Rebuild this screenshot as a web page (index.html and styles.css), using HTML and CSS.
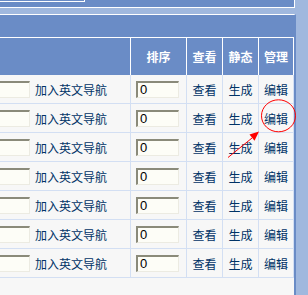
FILE: index.html
```html
<!DOCTYPE html>
<html>
<head>
<meta charset="utf-8">
<link rel="stylesheet" href="styles.css">
</head>
<body>
<div class="top-panel"><div class="tab"></div></div>
<div class="main">
  <div class="title-bar"></div>
  <div class="grid">
    <div class="hcell"></div>
    <div class="hcell">排序</div>
    <div class="hcell">查看</div>
    <div class="hcell">静态</div>
    <div class="hcell">管理</div>

    <div class="cell name"><input class="field wide" type="text" value=""><span>加入英文导航</span></div>
    <div class="cell order"><input class="field" type="text" value="0"></div>
    <div class="cell link">查看</div><div class="cell link">生成</div><div class="cell link">编辑</div>

    <div class="cell name"><input class="field wide" type="text" value=""><span>加入英文导航</span></div>
    <div class="cell order"><input class="field" type="text" value="0"></div>
    <div class="cell link">查看</div><div class="cell link">生成</div><div class="cell link">编辑</div>

    <div class="cell name"><input class="field wide" type="text" value=""><span>加入英文导航</span></div>
    <div class="cell order"><input class="field" type="text" value="0"></div>
    <div class="cell link">查看</div><div class="cell link">生成</div><div class="cell link">编辑</div>

    <div class="cell name"><input class="field wide" type="text" value=""><span>加入英文导航</span></div>
    <div class="cell order"><input class="field" type="text" value="0"></div>
    <div class="cell link">查看</div><div class="cell link">生成</div><div class="cell link">编辑</div>

    <div class="cell name"><input class="field wide" type="text" value=""><span>加入英文导航</span></div>
    <div class="cell order"><input class="field" type="text" value="0"></div>
    <div class="cell link">查看</div><div class="cell link">生成</div><div class="cell link">编辑</div>

    <div class="cell name"><input class="field wide" type="text" value=""><span>加入英文导航</span></div>
    <div class="cell order"><input class="field" type="text" value="0"></div>
    <div class="cell link">查看</div><div class="cell link">生成</div><div class="cell link">编辑</div>

    <div class="cell name"><input class="field wide" type="text" value=""><span>加入英文导航</span></div>
    <div class="cell order"><input class="field" type="text" value="0"></div>
    <div class="cell link">查看</div><div class="cell link">生成</div><div class="cell link">编辑</div>
  </div>
</div>
<svg class="annot" width="308" height="295" viewBox="0 0 308 295">
  <ellipse cx="278.5" cy="115.8" rx="17" ry="16" fill="none" stroke="#ff0000" stroke-width="1"/>
  <line x1="228" y1="157.5" x2="252" y2="138" stroke="#ff0000" stroke-width="1"/>
  <polygon points="259,131.5 254.5,140.8 249.5,134.6" fill="#ff0000"/>
</svg>
</body>
</html>
```
FILE: styles.css
```css
html, body {
  margin: 0;
  padding: 0;
}
body {
  width: 308px;
  height: 295px;
  overflow: hidden;
  background: #a0b8de;
  font-family: "Noto Sans CJK SC", "Noto Sans", sans-serif;
  font-size: 12px;
  position: relative;
}
.top-panel {
  width: 294px;
  height: 7px;
  background: #6a8cc6;
  border-bottom: 1px solid #ffffff;
  border-right: 1px solid #ffffff;
}
.tab {
  width: 84px;
  height: 1px;
  border-bottom: 1px solid #ffffff;
  border-right: 1px solid #ffffff;
}
.main {
  margin-top: 6px;
  width: 294px;
  height: 280px;
  border-top: 1px solid #ffffff;
  border-right: 2px solid #6a8cc6;
  background: #f7f7f7;
}
.title-bar {
  height: 22px;
  background: #6a8cc6;
  border-bottom: 1px solid #ffffff;
}
.grid {
  display: grid;
  grid-template-columns: 131px 56px 36px 36px 35px;
}
.hcell {
  box-sizing: border-box;
  height: 37px;
  background: #6a8cc6;
  border-right: 1px solid #ffffff;
  color: #ffffff;
  font-weight: bold;
  display: flex;
  align-items: center;
  justify-content: center;
}
.cell {
  box-sizing: border-box;
  height: 29px;
  border-right: 1px solid #d3dff3;
  border-bottom: 1px solid #d3dff3;
  color: #003366;
  display: flex;
  align-items: center;
}
.cell.name {
  gap: 5px;
}
.cell.order {
  padding-left: 5px;
}
.cell.link {
  justify-content: center;
}
.field {
  box-sizing: border-box;
  width: 43px;
  height: 17px;
  margin: 0;
  padding: 0 0 0 2px;
  border-style: solid;
  border-width: 2px 1px 1px 2px;
  border-color: #8a8a7a #ecebe2 #ecebe2 #8a8a7a;
  background: #fdfdf7;
  font-family: "Liberation Sans", sans-serif;
  font-size: 13px;
  color: #000000;
  outline: none;
}
.field.wide {
  width: 52px;
  margin-left: -22px;
}
.annot {
  position: absolute;
  left: 0;
  top: 0;
  pointer-events: none;
}
```
